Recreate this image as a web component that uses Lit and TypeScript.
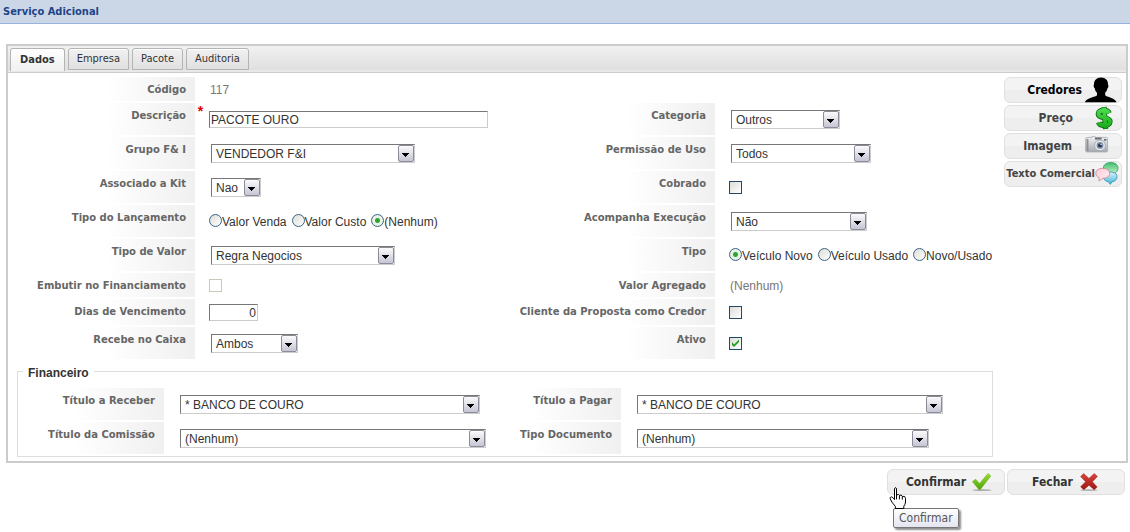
import { LitElement, html, css, nothing, TemplateResult } from "lit";
import { customElement, property } from "lit/decorators.js";
import { styleMap } from "lit/directives/style-map.js";

type Field = {
  id: string;
  label: string;
  kind: "text" | "input" | "select" | "check" | "radio";
  value?: string;
  width?: number;
  required?: boolean;
  numeric?: boolean;
  checked?: boolean;
  disabled?: boolean;
  options?: string[];
};

const DADOS: [Field, Field | null][] = [
  [{ id: "codigo", label: "Código", kind: "text", value: "117" }, null],
  [
    { id: "descricao", label: "Descrição", kind: "input", value: "PACOTE OURO", width: 279, required: true },
    { id: "categoria", label: "Categoria", kind: "select", value: "Outros", width: 109 },
  ],
  [
    { id: "grupo", label: "Grupo F& I", kind: "select", value: "VENDEDOR F&I", width: 204 },
    { id: "permissao", label: "Permissão de Uso", kind: "select", value: "Todos", width: 140 },
  ],
  [
    { id: "kit", label: "Associado a Kit", kind: "select", value: "Nao", width: 50 },
    { id: "cobrado", label: "Cobrado", kind: "check" },
  ],
  [
    { id: "lancamento", label: "Tipo do Lançamento", kind: "radio", value: "(Nenhum)", options: ["Valor Venda", "Valor Custo", "(Nenhum)"] },
    { id: "execucao", label: "Acompanha Execução", kind: "select", value: "Não", width: 136 },
  ],
  [
    { id: "tipovalor", label: "Tipo de Valor", kind: "select", value: "Regra Negocios", width: 184 },
    { id: "tipo", label: "Tipo", kind: "radio", value: "Veículo Novo", options: ["Veículo Novo", "Veículo Usado", "Novo/Usado"] },
  ],
  [
    { id: "embutir", label: "Embutir no Financiamento", kind: "check", disabled: true },
    { id: "agregado", label: "Valor Agregado", kind: "text", value: "(Nenhum)" },
  ],
  [
    { id: "dias", label: "Dias de Vencimento", kind: "input", value: "0", width: 49, numeric: true },
    { id: "cliente", label: "Cliente da Proposta como Credor", kind: "check" },
  ],
  [
    { id: "caixa", label: "Recebe no Caixa", kind: "select", value: "Ambos", width: 87 },
    { id: "ativo", label: "Ativo", kind: "check", checked: true },
  ],
];

const FINANCEIRO: [Field, Field][] = [
  [
    { id: "receber", label: "Título a Receber", kind: "select", value: "* BANCO DE COURO", width: 300 },
    { id: "pagar", label: "Título a Pagar", kind: "select", value: "* BANCO DE COURO", width: 306 },
  ],
  [
    { id: "comissao", label: "Título da Comissão", kind: "select", value: "(Nenhum)", width: 306 },
    { id: "documento", label: "Tipo Documento", kind: "select", value: "(Nenhum)", width: 292 },
  ],
];

const TABS = ["Dados", "Empresa", "Pacote", "Auditoria"];

const personIcon = html`<svg width="34" height="26" viewBox="0 0 34 26" aria-hidden="true">
  <path d="M17 0.5C12.6 0.5 9.8 3.4 10 7.6C9.2 8.2 9.6 10.6 10.8 11.4C11.2 13.6 12 14.8 13 15.8L13 18.2C11.6 20 2.6 20.6 0.8 25.2L32.6 25.2C30.8 20.8 22.6 20 21.2 18.2L21.2 15.6C22.4 14.6 23 13.2 23.4 11.4C24.6 10.6 24.8 8.4 24 7.8C24.4 3.4 21.4 0.5 17 0.5Z" fill="#000"/>
</svg>`;

const dollarIcon = html`<svg width="43" height="26" viewBox="0 0 43 26" aria-hidden="true">
  <defs><linearGradient id="dg" x1="0" y1="0" x2="0" y2="1"><stop offset="0" stop-color="#52e052"/><stop offset="1" stop-color="#17a817"/></linearGradient></defs>
  <g fill="none" stroke-linejoin="round">
    <path d="M29 2L30.6 24M34.2 8.2C32.8 4.8 24 4.2 23.4 8.8C23 13.6 35.2 11.4 35 16.6C34.6 21.8 25 21.4 23.6 17.4" stroke="#0a650f" stroke-width="5.4"/>
    <path d="M29 2.6L30.6 23.4M34.2 8.2C32.8 4.8 24 4.2 23.4 8.8C23 13.6 35.2 11.4 35 16.6C34.6 21.8 25 21.4 23.6 17.4" stroke="url(#dg)" stroke-width="3.8"/>
  </g>
</svg>`;

const cameraIcon = html`<svg width="44" height="26" viewBox="0 0 44 26" aria-hidden="true">
  <defs><linearGradient id="cg" x1="0" y1="0" x2="0" y2="1"><stop offset="0" stop-color="#f2f4f6"/><stop offset="1" stop-color="#a4a9af"/></linearGradient></defs>
  <path d="M14 4.4H18V3.4H21V4.4H32.6Q33.6 4.4 33.6 5.6V17.6Q33.6 19 32.2 19H13Q11.6 19 11.6 17.6V6Q11.6 4.4 14 4.4Z" fill="url(#cg)" stroke="#a5a9ae" stroke-width="0.8"/>
  <rect x="12.6" y="6" width="1.8" height="12" fill="#8b9096"/>
  <rect x="21" y="4.6" width="6.6" height="2" fill="#6b727a"/>
  <rect x="30" y="6" width="2.4" height="1.6" fill="#5e646b"/>
  <circle cx="26" cy="12.4" r="5.4" fill="#e7eaed" stroke="#9a9fa6" stroke-width="0.8"/>
  <circle cx="26" cy="12.4" r="3.4" fill="#7e8da4"/>
  <circle cx="26" cy="12.4" r="1.9" fill="#26324e"/>
  <circle cx="27" cy="11.5" r="0.8" fill="#dce9fb"/>
</svg>`;

const chatIcon = html`<svg width="24" height="26" viewBox="0 0 24 26" aria-hidden="true">
  <defs>
    <linearGradient id="g1" x1="0" y1="0" x2="0" y2="1"><stop offset="0" stop-color="#3fbf6a"/><stop offset="1" stop-color="#d4f7dc"/></linearGradient>
    <linearGradient id="g2" x1="0" y1="0" x2="0" y2="1"><stop offset="0" stop-color="#d9f2fb"/><stop offset="1" stop-color="#3fb3d6"/></linearGradient>
    <linearGradient id="g3" x1="0" y1="0" x2="1" y2="1"><stop offset="0" stop-color="#f9c9d3"/><stop offset="1" stop-color="#fff4f6"/></linearGradient>
  </defs>
  <path d="M15.6 1.6C20 1.6 23 3.6 23 6.8C23 9.4 22 10.8 20.4 11.6L21 14.2L17.6 12.4C12 12.8 8.4 10.4 8.4 7C8.4 3.8 11.4 1.6 15.6 1.6Z" fill="url(#g1)" stroke="#35985a" stroke-width="0.8"/>
  <path d="M15 11C19.6 11 22 13 22 15.8C22 18.6 20 20.4 17 20.8L15.4 23.4L13.4 20.8C10.4 20.4 8.4 18.4 8.4 15.8C8.4 13 11 11 15 11Z" fill="url(#g2)" stroke="#2d8fae" stroke-width="0.8"/>
  <path d="M7.4 7.4C12 7.4 14.6 9.4 14.6 12.4C14.6 15.4 12 17.2 8 17.2L4 20L4.2 16.6C2 15.8 0.8 14.4 0.8 12.2C0.8 9.4 3.4 7.4 7.4 7.4Z" fill="url(#g3)" stroke="#d17f91" stroke-width="0.8"/>
</svg>`;

const checkIcon = html`<svg width="22" height="22" viewBox="0 0 22 22" aria-hidden="true">
  <defs><linearGradient id="kg" x1="0" y1="0" x2="0" y2="1"><stop offset="0" stop-color="#9bdc34"/><stop offset="1" stop-color="#4da30c"/></linearGradient></defs>
  <ellipse cx="11" cy="19.2" rx="9.6" ry="0.9" fill="#000" opacity="0.28"/>
  <path d="M1.4 10.6L4.6 8.2L8.6 12.4L17 2.6L19.8 5L9.4 18.4H7.8Z" fill="url(#kg)" stroke="#6cb51c" stroke-width="0.6"/>
</svg>`;

const crossIcon = html`<svg width="22" height="22" viewBox="0 0 22 22" aria-hidden="true">
  <defs><linearGradient id="xg" x1="0" y1="0" x2="0" y2="1"><stop offset="0" stop-color="#d8443c"/><stop offset="1" stop-color="#9c1512"/></linearGradient></defs>
  <ellipse cx="11" cy="19.2" rx="8.6" ry="0.9" fill="#000" opacity="0.25"/>
  <path d="M5.6 2.6L11 7.4L16.2 2.6L19.4 5.4L14.4 10.8L19.2 16L16.2 18.8L11 14.2L5.8 18.8L2.6 15.8L7.6 10.8L2.6 5.6Z" fill="url(#xg)" stroke="#a3201b" stroke-width="0.5"/>
</svg>`;

const handCursor = html`<svg class="cursor" width="18" height="23" viewBox="0 0 18 23" aria-hidden="true">
  <path d="M5.5 1.5Q6 0.5 7 0.8Q7.5 1 7.5 2V8Q9.8 6.6 10.3 8.4Q12.6 7.2 13.2 9.4Q16.4 8.4 16.5 11.4V15Q16.4 17.4 14.8 19.2V21.5H6.4V19.4Q3 16 1.2 11.8Q0.8 10 2.4 9.9Q3.8 10 5.5 12.6Z" fill="#fff" stroke="#000" stroke-width="1"/>
  <path d="M7.5 7.6V12.4M10.4 8.6V12.4M13.3 9.6V12.6" stroke="#000" fill="none"/>
</svg>`;

@customElement("form-field")
export class FormField extends LitElement {
  @property({ attribute: false }) field!: Field;

  static styles = css`
    :host {
      display: contents;
      font: 12px/16px "Liberation Sans", Arial, sans-serif;
      color: #333;
    }
    .label {
      box-sizing: border-box;
      padding: 5px 9px 3px 0;
      text-align: right;
      white-space: nowrap;
      font: bold 10px/16px "DejaVu Sans", Verdana, sans-serif;
      color: #666;
      background: linear-gradient(to right, #fff, #f0f0f0) right / 90px 100% no-repeat;
    }
    .control {
      display: grid;
      grid-template-columns: 14px minmax(0, 1fr);
      align-items: center;
      justify-items: start;
      box-sizing: border-box;
      padding-top: 1px;
    }
    .marker {
      align-self: start;
      justify-self: center;
      padding-right: 3px;
      height: 16px;
      font: bold 14px/14px "Liberation Sans", Arial, sans-serif;
      color: #e00000;
    }
    .text {
      padding-left: 1px;
      color: #777;
    }
    .input {
      box-sizing: border-box;
      height: 17px;
      max-width: 100%;
      margin: 0;
      padding: 0 1px;
      border: 1px solid;
      border-color: #777 #ccc #ccc #777;
      border-radius: 0;
      background: #fff;
      font: inherit;
      color: #333;
    }
    .numeric {
      text-align: right;
    }
    .combo {
      display: grid;
      max-width: 100%;
      margin-left: 2px;
    }
    .select {
      grid-area: 1 / 1;
      appearance: none;
      box-sizing: border-box;
      width: 100%;
      height: 19px;
      margin: 0;
      padding: 0 18px 0 4px;
      border: 1px solid;
      border-color: #777 #ccc #ccc #777;
      border-radius: 0;
      background: #fff;
      font: inherit;
      color: #333;
    }
    .arrow {
      grid-area: 1 / 1;
      justify-self: end;
      align-self: center;
      margin-right: 1px;
      pointer-events: none;
    }
    .check,
    .radio {
      appearance: none;
      box-sizing: border-box;
      width: 13px;
      height: 13px;
      margin: 0;
      border: 1px solid #1c4a68;
      background: linear-gradient(135deg, #dcdcd7, #fff);
    }
    .check:disabled {
      border-color: #cac8bb;
      background: #fff;
    }
    .tick-box {
      display: grid;
      align-items: center;
      justify-items: center;
    }
    .tick-box > * {
      grid-area: 1 / 1;
    }
    .tick {
      pointer-events: none;
    }
    .radio {
      border-color: #3c6484;
      border-radius: 50%;
    }
    .radio:checked {
      background: radial-gradient(circle, #2fa52f 0 2px, #e9f2e6 3px);
    }
    .radios {
      display: flex;
      gap: 5px;
      white-space: nowrap;
    }
    .option {
      display: flex;
      align-items: center;
    }
    .option .radio {
      margin-bottom: 3px;
    }
  `;

  private control(f: Field): TemplateResult {
    const size = styleMap({ width: `${f.width}px` });
    switch (f.kind) {
      case "text":
        return html`<output class="text" id=${f.id}>${f.value}</output>`;
      case "input":
        return html`<input class="input ${f.numeric ? "numeric" : ""}" id=${f.id} type="text" .value=${f.value ?? ""} style=${size} />`;
      case "select":
        return html`<span class="combo" style=${size}>
          <select class="select" id=${f.id}><option selected>${f.value}</option></select>
          <svg class="arrow" width="16" height="17" viewBox="0 0 16 17" aria-hidden="true">
            <defs><linearGradient id="ag" x1="0" y1="0" x2="0" y2="1"><stop offset="0" stop-color="#fdfdfd"/><stop offset="1" stop-color="#c3c3d4"/></linearGradient></defs>
            <rect x="0.5" y="0.5" width="15" height="16" rx="1.5" fill="url(#ag)" stroke="#8c8c99"/>
            <path d="M4 8H11V9H10V10H9V11H8V12H7V11H6V10H5V9H4Z" fill="#000" shape-rendering="crispEdges"/>
          </svg>
        </span>`;
      case "check":
        return html`<span class="tick-box">
          <input class="check" id=${f.id} type="checkbox" ?checked=${f.checked} ?disabled=${f.disabled} />
          ${f.checked
            ? html`<svg class="tick" width="13" height="13" viewBox="0 0 13 13" aria-hidden="true"><path d="M3 5V8L5 10L10 5V2.6L5 7.4Z" fill="#21a121"/></svg>`
            : nothing}
        </span>`;
      case "radio":
        return html`<span class="radios" role="radiogroup" aria-labelledby="${f.id}-label">
          ${f.options!.map(
            (o) => html`<label class="option"><input class="radio" type="radio" name=${f.id} ?checked=${o === f.value} />${o}</label>`,
          )}
        </span>`;
    }
  }

  render() {
    const f = this.field;
    return html`
      ${f.kind === "radio"
        ? html`<span class="label" id="${f.id}-label">${f.label}</span>`
        : html`<label class="label" for=${f.id}>${f.label}</label>`}
      <div class="control">
        <span class="marker">${f.required ? "*" : nothing}</span>
        ${this.control(f)}
      </div>
    `;
  }
}

@customElement("app-root")
export class AppRoot extends LitElement {
  static styles = css`
    :host {
      display: block;
      min-height: 100vh;
      background: #fff;
      font: 11px/16px "DejaVu Sans Condensed", Tahoma, sans-serif;
      color: #333;
    }
    .title {
      margin: 0;
      padding: 4px 3px 3px;
      border-bottom: 1px solid #99b4dc;
      background: #cbd6e7;
      font: bold 11px/16px "DejaVu Sans Condensed", Tahoma, sans-serif;
      color: #1d4487;
    }
    .panel {
      margin: 20px 2px 0 6px;
      border: 2px solid #ccc;
    }
    .tabs {
      display: flex;
      align-items: flex-end;
      gap: 3px;
      padding: 2px 2px 0;
      border-bottom: 1px solid #ccc;
      background: linear-gradient(#f1f1f1, #dedede);
      box-shadow: inset 0 -2px #e8e8e8;
    }
    .tab {
      box-sizing: border-box;
      height: 22px;
      margin: 0 0 2px;
      padding: 0 8px;
      border: 1px solid #b4b4b4;
      border-radius: 3px 3px 0 0;
      background: linear-gradient(#f1f1f1, #e0e0e0);
      box-shadow: inset 0 1px #fff;
      font: inherit;
      color: #333;
    }
    .active {
      height: 23px;
      margin-bottom: 1px;
      padding: 0 9px;
      border-bottom: 0;
      background: linear-gradient(#fff, #f0f0f0);
      font-weight: bold;
    }
    .body {
      display: flex;
      gap: 11px;
      padding: 4px 4px 4px 9px;
    }
    .form {
      flex: 1;
      min-width: 0;
    }
    .grid {
      display: grid;
      grid-template-columns: 178px minmax(0, 320fr) 200px minmax(0, 278fr);
      grid-template-rows: 24px repeat(5, 32px) 24px 26px 32px;
      row-gap: 2px;
    }
    .blank {
      grid-column: span 2;
    }
    .group {
      margin: 2px 0 0;
      min-width: 0;
      padding: 7px 0 2px;
      border: 1px solid #ddd;
    }
    .legend {
      margin-left: 5px;
      padding: 4px 5px 0;
      font: bold 12px/16px "Liberation Sans", Arial, sans-serif;
    }
    .finance {
      display: grid;
      grid-template-columns: 146px minmax(0, 353fr) 104px minmax(0, 371fr);
      grid-auto-rows: 32px;
      row-gap: 2px;
    }
    .side {
      display: flex;
      flex-direction: column;
      gap: 2px;
    }
    .button {
      display: flex;
      align-items: center;
      box-sizing: border-box;
      width: 118px;
      height: 26px;
      margin: 0;
      border: 1px solid #e0e0e0;
      border-radius: 6px;
      background: linear-gradient(#f3f3f3 50%, #eee 50%);
      font: bold 12px/16px "DejaVu Sans Condensed", Tahoma, sans-serif;
      color: #444;
      white-space: nowrap;
    }
    .tool {
      justify-content: flex-end;
      gap: 2px;
      padding: 0 3px 0 0;
    }
    .strong {
      color: #000;
    }
    .small {
      gap: 0;
      padding-right: 2px;
      font-size: 11px;
    }
    .actions {
      display: flex;
      justify-content: flex-end;
      gap: 2px;
      padding: 6px 5px 0 0;
    }
    .action {
      justify-content: center;
      gap: 5px;
      padding: 0;
      color: #333;
    }
    .confirm {
      padding-left: 7px;
    }
    .anchor {
      position: relative;
    }
    .tip {
      position: absolute;
      top: 39px;
      left: 6px;
      box-sizing: border-box;
      height: 20px;
      padding: 1px 5px;
      border: 1px solid #767676;
      border-radius: 2px;
      background: linear-gradient(#fff, #e4e5f0);
      box-shadow: 2px 2px 2px rgba(0, 0, 0, 0.45);
      font-size: 12px;
      color: #555;
    }
    .cursor {
      position: absolute;
      top: 18px;
      left: 2px;
      pointer-events: none;
    }
  `;

  render() {
    return html`
      <h1 class="title">Serviço Adicional</h1>
      <main class="panel">
        <nav class="tabs" role="tablist">
          ${TABS.map(
            (t, i) => html`<button class="tab ${i === 0 ? "active" : ""}" role="tab" aria-selected=${i === 0}>${t}</button>`,
          )}
        </nav>
        <div class="body">
          <div class="form">
            <div class="grid">
              ${DADOS.map(
                ([a, b]) => html`<form-field .field=${a}></form-field>${b
                    ? html`<form-field .field=${b}></form-field>`
                    : html`<span class="blank"></span>`}`,
              )}
            </div>
            <fieldset class="group">
              <legend class="legend">Financeiro</legend>
              <div class="finance">
                ${FINANCEIRO.flat().map((f) => html`<form-field .field=${f}></form-field>`)}
              </div>
            </fieldset>
          </div>
          <aside class="side">
            <button class="button tool strong">Credores${personIcon}</button>
            <button class="button tool">Preço${dollarIcon}</button>
            <button class="button tool">Imagem${cameraIcon}</button>
            <button class="button tool small">Texto Comercial${chatIcon}</button>
          </aside>
        </div>
      </main>
      <footer class="actions">
        <div class="anchor">
          <button class="button action confirm" aria-describedby="tip">Confirmar${checkIcon}</button>
          <span class="tip" id="tip" role="tooltip">Confirmar</span>
          ${handCursor}
        </div>
        <button class="button action">Fechar${crossIcon}</button>
      </footer>
    `;
  }
}
